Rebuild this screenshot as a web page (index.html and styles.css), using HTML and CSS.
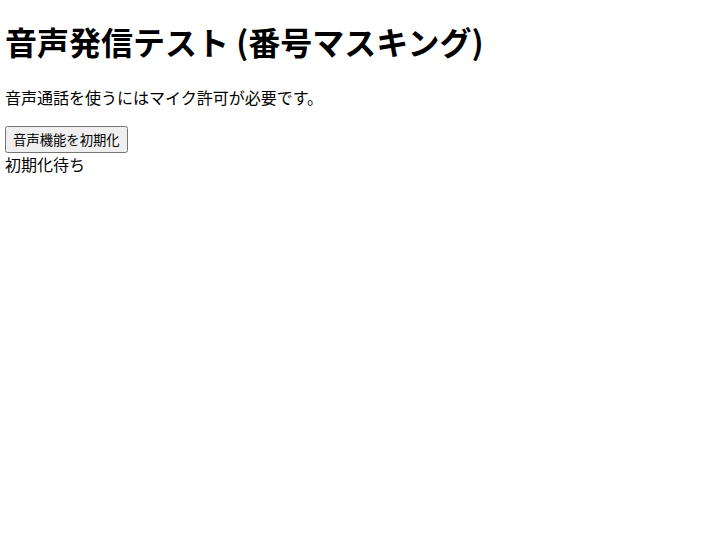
FILE: index.html
```html
<!DOCTYPE html>
<html lang="ja">
<head>
<meta charset="utf-8">
<title>音声発信テスト</title>
<link rel="stylesheet" href="styles.css">
</head>
<body class="page">
<h1 class="title">音声発信テスト (番号マスキング)</h1>
<p class="note">音声通話を使うにはマイク許可が必要です。</p>
<button class="init-btn" type="button">音声機能を初期化</button>
<div class="status">初期化待ち</div>
</body>
</html>
```
FILE: styles.css
```css
html {
  background: #ffffff;
}
.page {
  margin: 0 5px;
  padding-top: 1px;
  font-family: "Noto Sans CJK JP", sans-serif;
  color: #000000;
}
.title {
  font-size: 32px;
  font-weight: bold;
  line-height: 40px;
  margin: 20px 0 25px;
}
.note {
  font-size: 16px;
  line-height: 22px;
  margin: 0 0 18px;
}
.init-btn {
  font-family: "Noto Sans CJK JP", sans-serif;
  font-size: 13.33px;
  line-height: 19px;
  padding: 2px 6px;
  margin: 0;
  display: block;
}
.status {
  font-size: 16px;
  line-height: 22px;
}
```
